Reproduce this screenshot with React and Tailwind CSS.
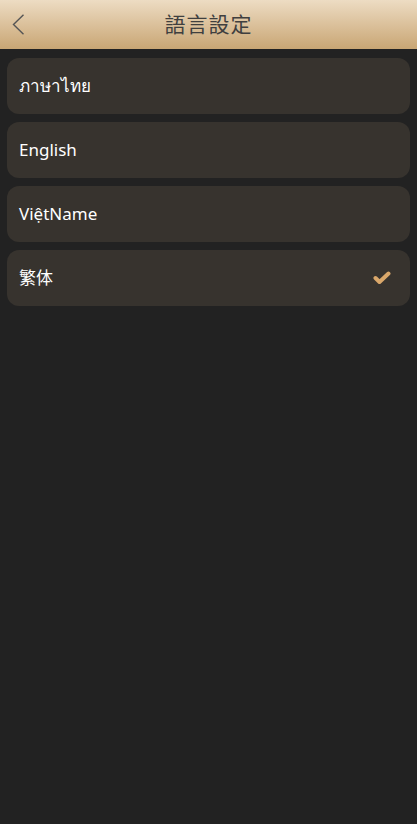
import React from "react";

const langs = [
  { name: "ภาษาไทย", active: false },
  { name: "English", active: false },
  { name: "ViệtName", active: false },
  { name: "繁体", active: true },
];

export default function App() {
  return (
    <div
      className="min-h-[824px] bg-[#222222]"
      style={{ fontFamily: '"Noto Sans", "Noto Sans CJK TC", sans-serif' }}
    >
      <div className="relative h-[49px] flex items-center justify-center bg-gradient-to-b from-[#eddcc3] to-[#c9a674]">
        <button className="absolute left-[12px] top-[14px] w-[13px] h-[21px]">
          <svg width="13" height="21" viewBox="0 0 13 21" fill="none">
            <path d="M11.5 0.8 L1.5 10.5 L11.5 20.2" stroke="#555" strokeWidth="1.4" />
          </svg>
        </button>
        <h1 className="text-[21px] tracking-[1px] text-[#3f3f3f] font-normal">語言設定</h1>
      </div>
      <div className="flex flex-col gap-2 px-[7px] pt-[9px]">
        {langs.map((l) => (
          <div
            key={l.name}
            className="h-[56px] rounded-[12px] bg-[#37332e] flex items-center justify-between pl-3 pr-[19px]"
          >
            <span className="text-[17px] text-white">{l.name}</span>
            {l.active && (
              <svg width="18" height="14" viewBox="0 0 18 14">
                <path d="M2.5 7 L6.5 11 L15.5 2.5" stroke="#d9a76a" strokeWidth="4" fill="none" strokeLinecap="round" strokeLinejoin="round" />
              </svg>
            )}
          </div>
        ))}
      </div>
    </div>
  );
}
